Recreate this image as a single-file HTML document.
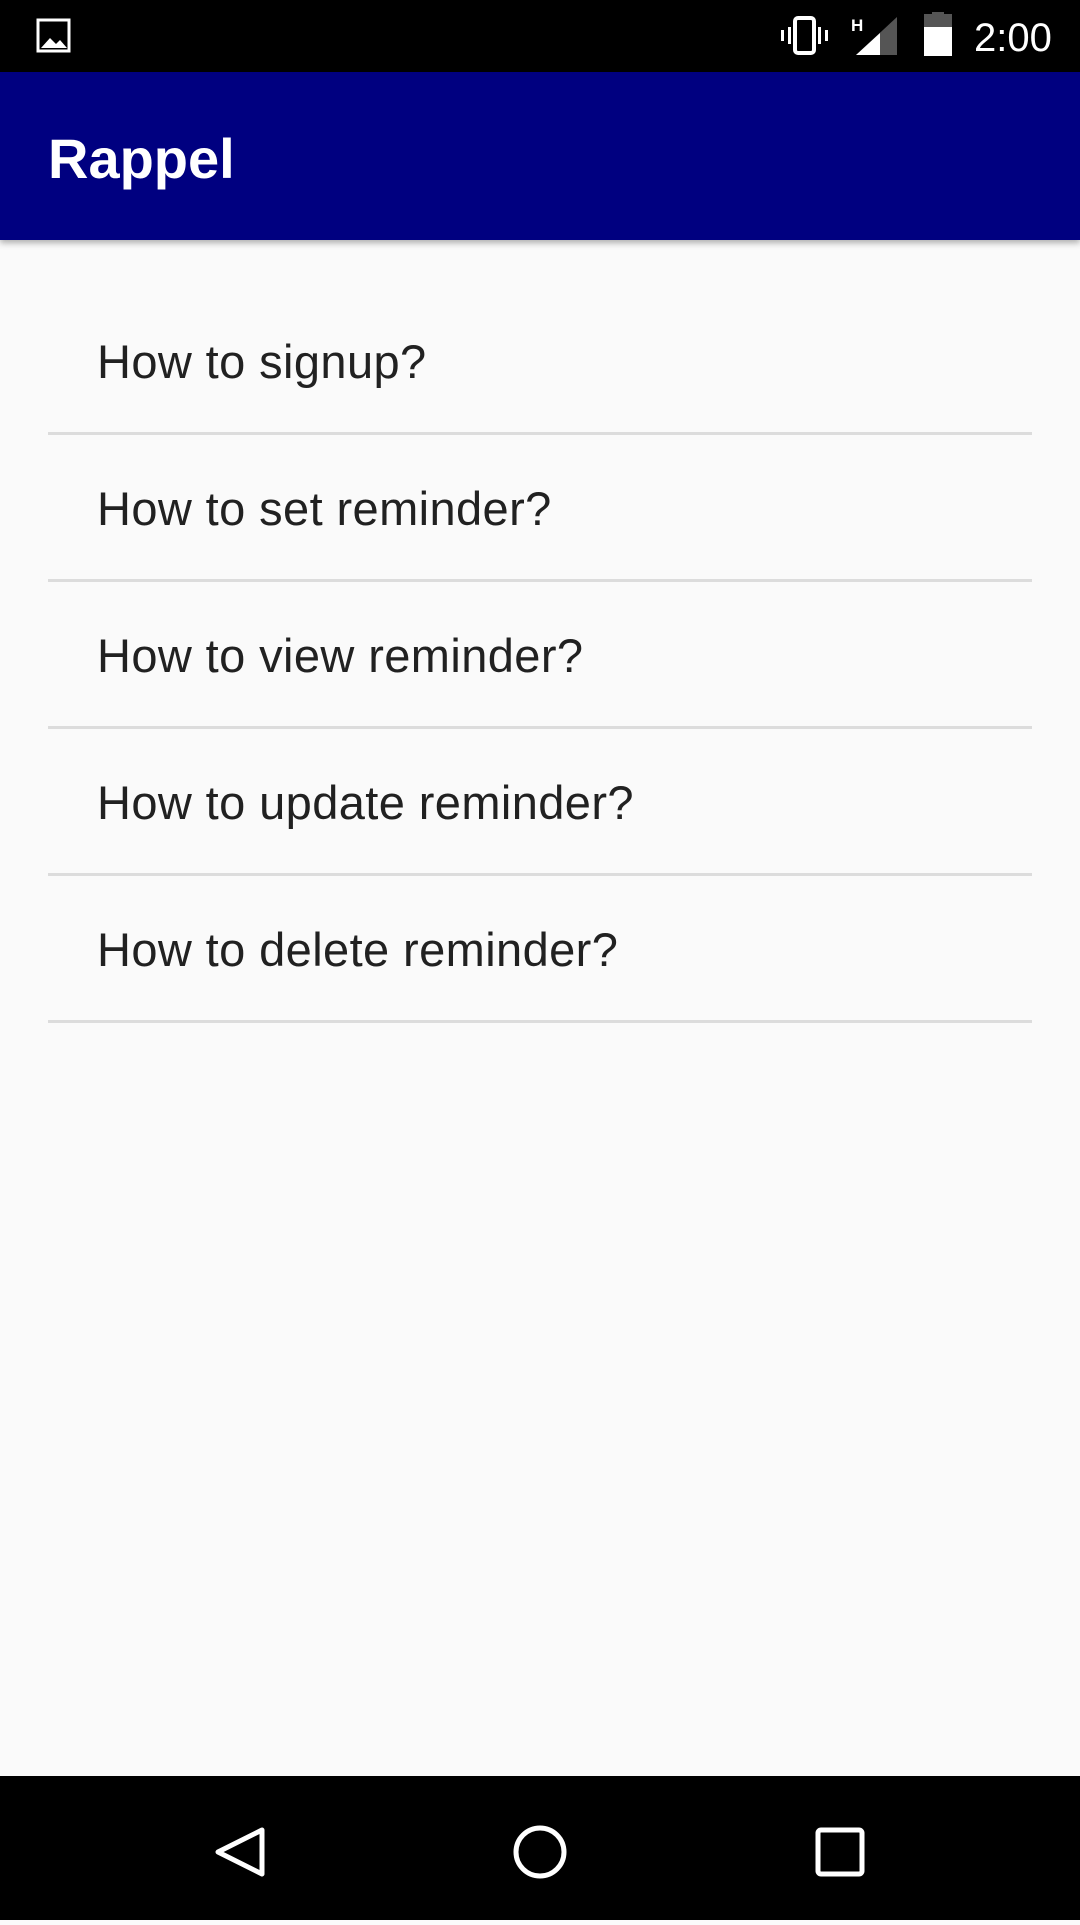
<!DOCTYPE html><html><head><style>
body{margin:0;width:1080px;height:1920px;background:#fafafa;position:relative;overflow:hidden;font-family:"Liberation Sans",sans-serif}
.sb{position:absolute;top:0;left:0;width:1080px;height:72px;background:#000}
.ab{position:absolute;top:72px;left:0;width:1080px;height:168px;background:#000080;box-shadow:0 3px 6px rgba(0,0,0,.3)}
.ab span{position:absolute;left:48px;top:54px;color:#fff;font-size:56px;font-weight:bold}
.it{position:absolute;left:97px;font-size:47px;color:#212121;line-height:1;letter-spacing:0.4px}
.dv{position:absolute;left:48px;width:984px;height:3px;background:#dcdcdc}
.nb{position:absolute;top:1776px;left:0;width:1080px;height:144px;background:#000}
</style></head><body>
<div class="sb">
<svg width="1080" height="72" style="position:absolute;left:0;top:0">
<rect x="38" y="20" width="31" height="31" fill="none" stroke="#fff" stroke-width="3"/>
<path d="M41 48 L50 38 L56 44 L60 40 L67 48 Z" fill="#fff"/>
<rect x="795" y="18" width="19" height="35" rx="3" fill="none" stroke="#fff" stroke-width="4"/>
<rect x="788" y="27" width="3" height="17" fill="#fff"/><rect x="781" y="30" width="3" height="11" fill="#fff"/>
<rect x="818" y="27" width="3" height="17" fill="#fff"/><rect x="825" y="30" width="3" height="11" fill="#fff"/>
<text x="851" y="31" fill="#fff" font-size="17" font-weight="bold" font-family="Liberation Sans">H</text>
<path d="M856 55 L897 17 L897 55 Z" fill="#555"/><path d="M856 55 L880 33 L880 55 Z" fill="#fff"/>
<rect x="924" y="14" width="28" height="42" fill="#555"/><rect x="932" y="12" width="12" height="4" fill="#555"/>
<rect x="924" y="27" width="28" height="29" fill="#fff"/>
<text x="974" y="51" fill="#fff" font-size="40" font-family="Liberation Sans">2:00</text>
</svg></div>
<div class="ab"><span>Rappel</span></div>
<div class="it" style="top:338px">How to signup?</div><div class="dv" style="top:432px"></div>
<div class="it" style="top:485px">How to set reminder?</div><div class="dv" style="top:579px"></div>
<div class="it" style="top:632px">How to view reminder?</div><div class="dv" style="top:726px"></div>
<div class="it" style="top:779px">How to update reminder?</div><div class="dv" style="top:873px"></div>
<div class="it" style="top:926px">How to delete reminder?</div><div class="dv" style="top:1020px"></div>
<div class="nb"><svg width="1080" height="144">
<path d="M262 54 L218 76 L262 98 Z" fill="none" stroke="#fff" stroke-width="5" stroke-linejoin="round"/>
<circle cx="540" cy="76" r="24" fill="none" stroke="#fff" stroke-width="5"/>
<rect x="818" y="54" width="44" height="44" rx="3" fill="none" stroke="#fff" stroke-width="5"/>
</svg></div>
</body></html>
